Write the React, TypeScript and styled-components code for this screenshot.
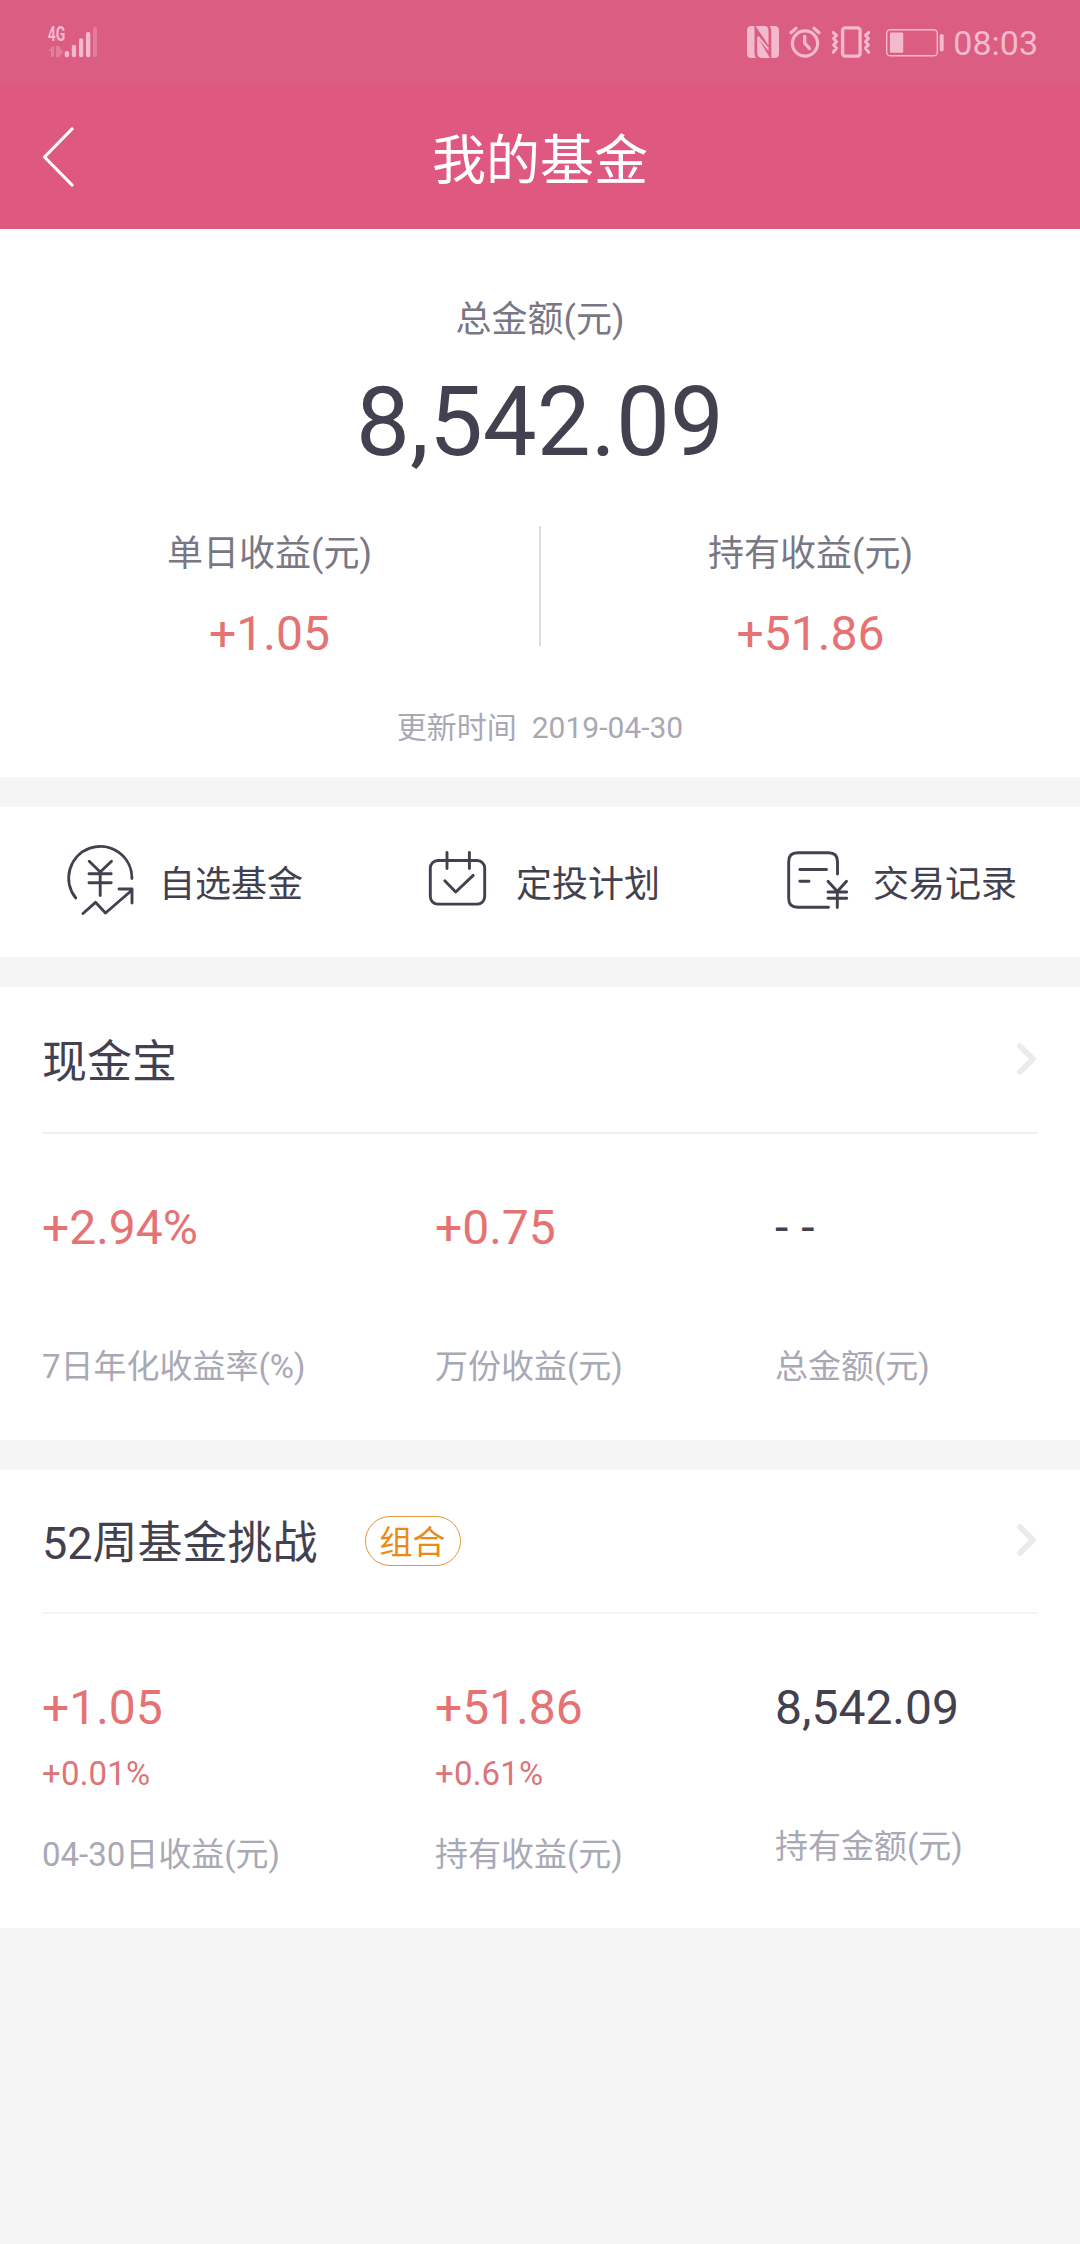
import React from "react";
import styled, { createGlobalStyle } from "styled-components";

const INK = "#43414f";
const RED = "#e57373";
const MUTED = "#a9a8b5";
const STATUS = "#f3b9cd";

const GlobalStyle = createGlobalStyle`
  * { box-sizing: border-box; }
  body {
    margin: 0;
    background: #f5f5f5;
    font-family: Roboto, "Noto Sans CJK SC", sans-serif;
    color: ${INK};
  }
  svg { display: block; flex: none; }
`;

const Screen = styled.div`
  width: 1080px;
  min-height: 2244px;
  display: flex;
  flex-direction: column;
  background: #f5f5f5;
`;

const StatusBar = styled.div`
  height: 84px;
  padding: 0 42px 0 40px;
  display: flex;
  align-items: center;
  justify-content: space-between;
  background: #db5d82;
`;

const StatusIcons = styled.div`
  display: flex;
  align-items: center;
`;

const IconSlot = styled.div<{ $gap: number; $drop?: number }>`
  margin-right: ${(p) => p.$gap}px;
  padding-top: ${(p) => p.$drop ?? 0}px;
`;

const Clock = styled.span`
  padding-top: 1px;
  font-size: 34px;
  line-height: 40px;
  color: ${STATUS};
`;

const Header = styled.header`
  height: 145px;
  padding: 0 42px;
  display: grid;
  grid-template-columns: 120px 1fr 120px;
  align-items: center;
  background: #df5880;
`;

const HeaderTitle = styled.h1`
  margin: 0;
  padding-top: 10px;
  font-size: 54px;
  line-height: 70px;
  font-weight: 400;
  text-align: center;
  color: #fff;
`;

const Summary = styled.section`
  height: 548px;
  padding-top: 66px;
  display: flex;
  flex-direction: column;
  align-items: center;
  background: #fff;
`;

const SummaryLabel = styled.div`
  font-size: 36px;
  line-height: 50px;
  color: #797784;
`;

const TotalAmount = styled.div`
  margin-top: 22px;
  font-size: 96px;
  line-height: 110px;
`;

const Earnings = styled.div`
  width: 100%;
  margin-top: 49px;
  display: grid;
  grid-template-columns: 1fr 2px 1fr;
`;

const Earning = styled.div`
  padding-top: 3px;
  display: flex;
  flex-direction: column;
  align-items: center;
`;

const EarningValue = styled.div`
  margin-top: 30px;
  font-size: 48px;
  line-height: 50px;
  color: ${RED};
`;

const EarningDivider = styled.div`
  height: 120px;
  background: #dcdcdf;
`;

const Updated = styled.div`
  margin-top: 49px;
  font-size: 30px;
  line-height: 40px;
  color: ${MUTED};
  white-space: pre;
`;

const Actions = styled.nav`
  height: 150px;
  margin-top: 30px;
  padding: 0 63px 6px 65px;
  display: flex;
  align-items: center;
  justify-content: space-between;
  background: #fff;
`;

const Action = styled.div`
  display: flex;
  align-items: center;
  gap: 24px;
`;

const ActionLabel = styled.span`
  padding-top: 12px;
  font-size: 36px;
  line-height: 50px;
`;

const Card = styled.section`
  margin-top: 30px;
  padding: 0 42px;
  background: #fff;
`;

const CardHeader = styled.div<{ $height: number; $line: string }>`
  height: ${(p) => p.$height}px;
  display: flex;
  align-items: center;
  border-bottom: 2px solid ${(p) => p.$line};
`;

const CardTitle = styled.h2`
  margin: 0;
  padding-top: 6px;
  font-size: 45px;
  line-height: 60px;
  font-weight: 400;
`;

const Badge = styled.span`
  height: 50px;
  margin-left: 47px;
  padding: 2px 14px 0;
  border: 1px solid #e0963c;
  border-radius: 25px;
  font-size: 33px;
  line-height: 47px;
  color: #ea8a14;
`;

const CardArrow = styled.div`
  margin: 0 2px 2px auto;
`;

const Stats = styled.div<{ $height: number }>`
  height: ${(p) => p.$height}px;
  padding-top: 64px;
  display: grid;
  grid-template-columns: 393px 340px 1fr;
  align-items: start;
`;

const StatValue = styled.div<{ $gain?: boolean }>`
  font-size: 48px;
  line-height: 60px;
  word-spacing: 1px;
  color: ${(p) => (p.$gain ? RED : INK)};
`;

const StatRate = styled.div`
  margin-top: 16px;
  font-size: 33px;
  line-height: 40px;
  letter-spacing: 0.2px;
  color: #dc7478;
`;

const StatLabel = styled.div<{ $gap: number }>`
  margin-top: ${(p) => p.$gap}px;
  font-size: 33px;
  line-height: 41px;
  color: ${MUTED};
`;

const SignalIcon = () => (
  <svg width="64" height="48" viewBox="-8 -8 64 48" fill={STATUS}>
    <text x="-0.300" y="14.700" fontSize="20" fontWeight="700" fontFamily="Roboto, sans-serif" textLength="17.500" lengthAdjust="spacingAndGlyphs">4G</text>
    <g opacity="0.350">
      <path d="M0 25 5 20H6V31H3V25zM8 20H11L15 26 11 31H8z" />
      <rect x="45" y="0.700" width="4" height="30.600" rx="2" />
    </g>
    <rect x="16.700" y="25" width="4.400" height="6.300" rx="2.100" />
    <rect x="23.800" y="18.700" width="4.300" height="12.600" rx="2" />
    <rect x="31" y="12.300" width="4.200" height="19" rx="2" />
    <rect x="38" y="6" width="4.300" height="25.300" rx="2" />
  </svg>
);

const NfcIcon = () => (
  <svg width="32" height="32" viewBox="0 0 32 32" fill={STATUS}>
    <path d="M7 0H4.500Q0 0 0 4.500V27.500Q0 32 4.500 32H9Q7.500 30 7.500 27V2Q7.500 .8 7 0z" />
    <path d="M8.500 0H17.500Q21.500 0 21.500 5V19.500z" />
    <path d="M22.700 0H27.500Q32 0 32 4.500V27.500Q32 32 27.500 32H24.300V5Q24.300 2 22.700 0z" />
    <path d="M10.200 10.500V27Q10.200 32 15.500 32H23z" />
    <path d="M11 12.500V9.500L21.500 21.500V25z" />
  </svg>
);

const AlarmIcon = () => (
  <svg width="32" height="32" viewBox="0 0 32 32" fill="none" stroke={STATUS} strokeWidth="3.200" strokeLinecap="round">
    <circle cx="16" cy="17.500" r="12.600" />
    <path d="M15.700 10.500V17L20.500 22.500" strokeWidth="3.400" />
    <path d="M2 6.800 7 2.300M25 2.300 30 6.800" />
  </svg>
);

const VibrateIcon = () => (
  <svg width="40" height="32" viewBox="0 0 40 32" fill="none" stroke={STATUS} strokeWidth="3.400" strokeLinejoin="round" strokeLinecap="round">
    <rect x="11.600" y="1.900" width="17.500" height="28.200" rx="2.500" />
    <path d="M2.300 6.500 5.500 9.500 2.600 12.500 5.500 15.800 2.600 19 5.500 22 2.300 26.300M37.700 6.500 34.500 9.500 37.400 12.500 34.500 15.800 37.400 19 34.500 22 37.700 26.300" strokeWidth="3.100" />
  </svg>
);

const BatteryIcon = () => (
  <svg width="58" height="28" viewBox="0 0 58 28" fill={STATUS}>
    <rect x="0.700" y="0.700" width="50.600" height="26" rx="3.500" fill="none" stroke={STATUS} strokeWidth="1.400" />
    <rect x="4" y="3.500" width="13.200" height="20.300" rx="1" />
    <rect x="53.700" y="5" width="4" height="17.500" rx="1.800" />
  </svg>
);

const BackIcon = () => (
  <svg width="34" height="60" viewBox="0 0 34 60" fill="none" stroke="#fff" strokeWidth="3.200" strokeLinecap="round" strokeLinejoin="round">
    <path d="M30 2 2.500 30 30 58" />
  </svg>
);

const ChevronIcon = () => (
  <svg width="19" height="32" viewBox="0 0 19 32" fill="none" stroke="#ebebeb" strokeWidth="5.800" strokeLinecap="round" strokeLinejoin="round">
    <path d="M2.900 3 16 16 2.900 29" />
  </svg>
);

const ActionSvg = ({ children }: { children: React.ReactNode }) => (
  <svg width="70" height="72" viewBox="0 0 70 72" fill="none" stroke={INK} strokeWidth="2.900" strokeLinecap="round" strokeLinejoin="round">
    {children}
  </svg>
);

const WatchlistIcon = () => (
  <ActionSvg>
    <path d="M66.900 35.500A31.600 31.600 0 1 0 10.800 55" />
    <path d="M24.200 18.300 35.200 29 46.500 18.300M35.200 29V52.500M24 30.700H46.200M24 39.700H46.200" />
    <path d="M18 70.500 30.500 59.300 40.500 70 66.500 47.500M54 46H67V60" />
  </ActionSvg>
);

const PlanIcon = () => (
  <ActionSvg>
    <rect x="8.300" y="17.500" width="54.400" height="43.600" rx="7.500" />
    <path d="M25 9.500V25.500M47.400 9.500V25.500M22.800 37.700 33.700 49 51.200 32.400" />
  </ActionSvg>
);

const RecordsIcon = () => (
  <ActionSvg>
    <path d="M58.500 31V18.500Q58.500 9.700 49.500 9.700H18.500Q9.700 9.700 9.700 18.500V55.500Q9.700 64.200 18.500 64.200H49.500" />
    <path d="M20.800 26.500H47.500M20.800 38.300H30M49 38.300 58.300 48.500 67.500 38.300M58.300 48.500V64.500M49 49H67.700M49 55.200H67.700" />
  </ActionSvg>
);

type Stat = { value: string; gain?: boolean; rate?: string; label: string };
type Holding = {
  title: string;
  badge?: string;
  headerHeight: number;
  statsHeight: number;
  line: string;
  stats: Stat[];
};

const holdings: Holding[] = [
  {
    title: "现金宝",
    headerHeight: 147,
    statsHeight: 306,
    line: "#f0f0f0",
    stats: [
      { value: "+2.94%", gain: true, label: "7日年化收益率(%)" },
      { value: "+0.75", gain: true, label: "万份收益(元)" },
      { value: "- -", label: "总金额(元)" },
    ],
  },
  {
    title: "52周基金挑战",
    badge: "组合",
    headerHeight: 144,
    statsHeight: 314,
    line: "#f5f5f5",
    stats: [
      { value: "+1.05", gain: true, rate: "+0.01%", label: "04-30日收益(元)" },
      { value: "+51.86", gain: true, rate: "+0.61%", label: "持有收益(元)" },
      { value: "8,542.09", label: "持有金额(元)" },
    ],
  },
];

const actions = [
  { label: "自选基金", icon: <WatchlistIcon /> },
  { label: "定投计划", icon: <PlanIcon /> },
  { label: "交易记录", icon: <RecordsIcon /> },
];

export default function App() {
  return (
    <Screen>
      <GlobalStyle />
      <StatusBar>
        <SignalIcon />
        <StatusIcons>
          <IconSlot $gap={10}><NfcIcon /></IconSlot>
          <IconSlot $gap={10}><AlarmIcon /></IconSlot>
          <IconSlot $gap={15}><VibrateIcon /></IconSlot>
          <IconSlot $gap={9} $drop={1}><BatteryIcon /></IconSlot>
          <Clock>08:03</Clock>
        </StatusIcons>
      </StatusBar>
      <Header>
        <BackIcon />
        <HeaderTitle>我的基金</HeaderTitle>
      </Header>
      <Summary>
        <SummaryLabel>总金额(元)</SummaryLabel>
        <TotalAmount>8,542.09</TotalAmount>
        <Earnings>
          <Earning>
            <SummaryLabel>单日收益(元)</SummaryLabel>
            <EarningValue>+1.05</EarningValue>
          </Earning>
          <EarningDivider />
          <Earning>
            <SummaryLabel>持有收益(元)</SummaryLabel>
            <EarningValue>+51.86</EarningValue>
          </Earning>
        </Earnings>
        <Updated>{"更新时间  2019-04-30"}</Updated>
      </Summary>
      <Actions>
        {actions.map((a) => (
          <Action key={a.label}>
            {a.icon}
            <ActionLabel>{a.label}</ActionLabel>
          </Action>
        ))}
      </Actions>
      {holdings.map((h) => (
        <Card key={h.title}>
          <CardHeader $height={h.headerHeight} $line={h.line}>
            <CardTitle>{h.title}</CardTitle>
            {h.badge && <Badge>{h.badge}</Badge>}
            <CardArrow><ChevronIcon /></CardArrow>
          </CardHeader>
          <Stats $height={h.statsHeight}>
            {h.stats.map((s) => (
              <div key={s.label}>
                <StatValue $gain={s.gain}>{s.value}</StatValue>
                {s.rate && <StatRate>{s.rate}</StatRate>}
                <StatLabel $gap={s.rate ? 40 : 88}>{s.label}</StatLabel>
              </div>
            ))}
          </Stats>
        </Card>
      ))}
    </Screen>
  );
}
